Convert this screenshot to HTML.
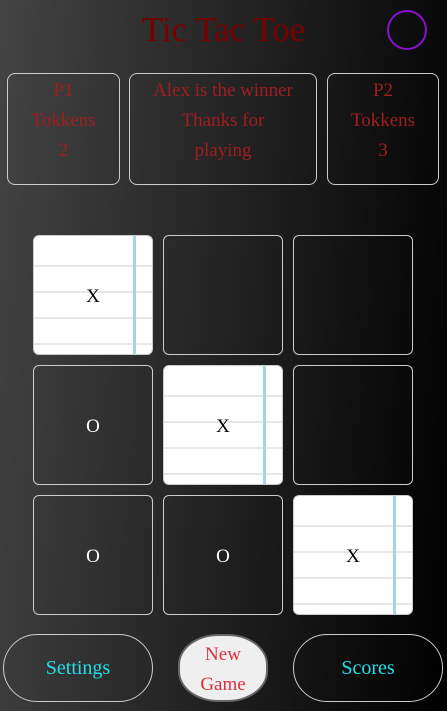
<!DOCTYPE html>
<html><head><style>
html,body{margin:0;padding:0;}
body{width:447px;height:711px;overflow:hidden;position:relative;
background:linear-gradient(95deg,#444 0%,#2c2c2c 35%,#161616 68%,#000 100%);
font-family:"Liberation Serif",serif;}
.a{position:absolute;box-sizing:border-box;}
.title{left:0;width:447px;top:10px;text-align:center;font-size:35px;line-height:40px;color:#7a0000;}
.circ{left:387px;top:10px;width:40px;height:40px;border:2px solid #8a10d0;border-radius:50%;}
.box{border:1px solid #ccc;border-radius:8px;top:73px;height:112px;color:#a01e1e;text-align:center;font-size:19px;line-height:30px;padding-top:2px;}
.cell{width:120px;height:120px;border:1px solid #ccc;border-radius:6px;display:flex;align-items:center;justify-content:center;font-size:19px;color:#fff;padding-top:4px;}
.paper{background:#fff;color:#000;
background-image:linear-gradient(90deg,transparent 99px,#a8d4dc 99px,#a8d4dc 102px,transparent 102px),
repeating-linear-gradient(180deg,transparent 0,transparent 24px,#e6e6e6 24px,#e6e6e6 26px);
background-position:0 0,0 5px;}
.btn{top:634px;height:68px;border:1px solid #ccc;border-radius:34px;color:#22e0e8;font-size:20px;display:flex;align-items:center;justify-content:center;}
.ng{left:178px;top:634px;width:90px;height:68px;border-radius:45%;background:#efefef;border:2px solid #666;color:#d83040;font-size:19px;line-height:30px;text-align:center;padding-top:4px;}
</style></head><body>
<div class="a title">Tic Tac Toe</div>
<div class="a circ"></div>
<div class="a box" style="left:7px;width:113px">P1<br>Tokkens<br>2</div>
<div class="a box" style="left:129px;width:188px">Alex is the winner<br>Thanks for<br>playing</div>
<div class="a box" style="left:327px;width:112px">P2<br>Tokkens<br>3</div>

<div class="a cell paper" style="left:33px;top:235px">X</div>
<div class="a cell" style="left:163px;top:235px"></div>
<div class="a cell" style="left:293px;top:235px"></div>
<div class="a cell" style="left:33px;top:365px">O</div>
<div class="a cell paper" style="left:163px;top:365px">X</div>
<div class="a cell" style="left:293px;top:365px"></div>
<div class="a cell" style="left:33px;top:495px">O</div>
<div class="a cell" style="left:163px;top:495px">O</div>
<div class="a cell paper" style="left:293px;top:495px">X</div>

<div class="a btn" style="left:3px;width:150px">Settings</div>
<div class="a ng">New<br>Game</div>
<div class="a btn" style="left:293px;width:150px">Scores</div>
</body></html>
